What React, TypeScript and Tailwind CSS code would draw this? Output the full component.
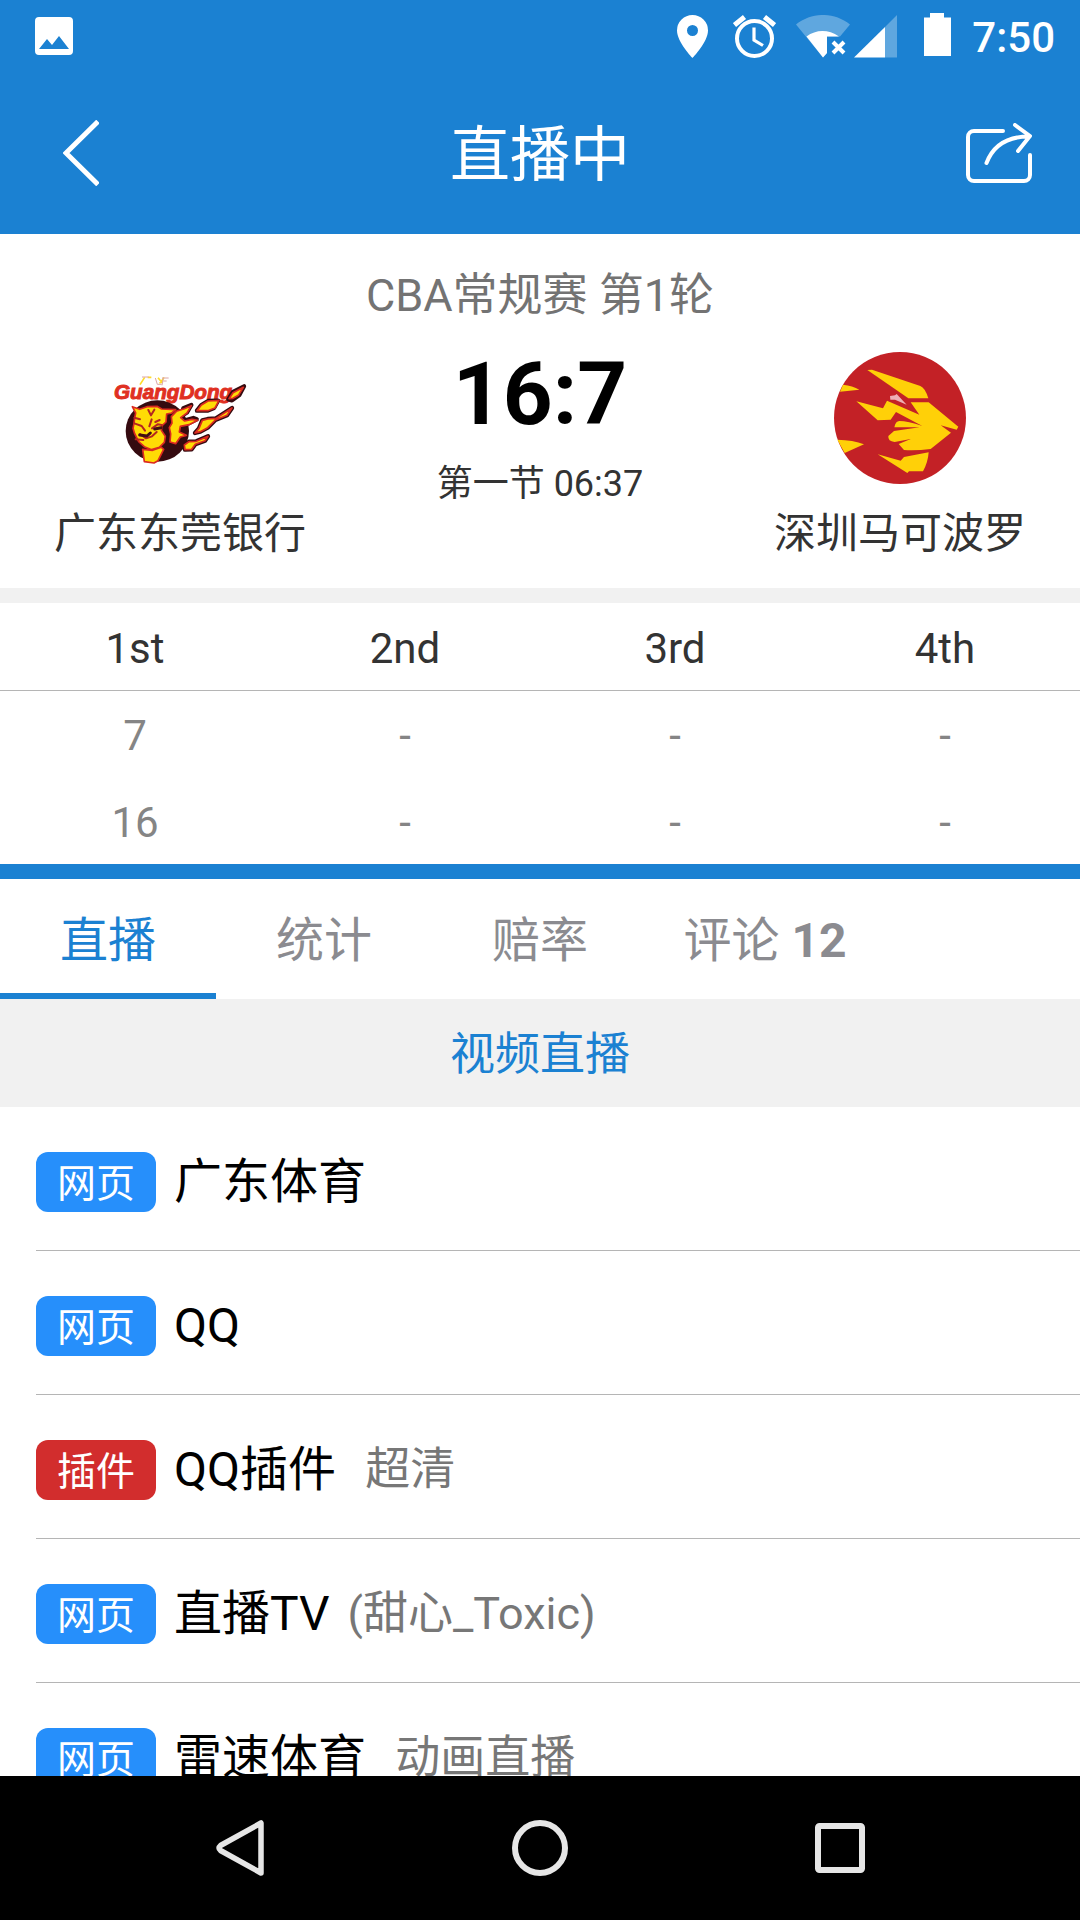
import { useState } from "react";

const quarters = ["1st", "2nd", "3rd", "4th"];
const scores = [
  ["7", "-", "-", "-"],
  ["16", "-", "-", "-"],
];
const tabs = [
  { label: "直播" },
  { label: "统计" },
  { label: "赔率" },
  { label: "评论", count: 12 },
];
const sources = [
  { kind: "网页", name: "广东体育" },
  { kind: "网页", name: "QQ" },
  { kind: "插件", name: "QQ插件", note: "\u00a0超清" },
  { kind: "网页", name: "直播TV", note: "(甜心_Toxic)" },
  { kind: "网页", name: "雷速体育", note: "\u00a0动画直播" },
];

function StatusBar() {
  return (
    <div className="flex h-18 items-center justify-between pr-[25px] pl-[35px] text-white">
      <svg className="h-[38px] w-[38px]" viewBox="0 0 38 38" aria-label="图片">
        <path fill="currentColor" fillRule="evenodd" d="M4 0h30a4 4 0 0 1 4 4v30a4 4 0 0 1-4 4H4a4 4 0 0 1-4-4V4a4 4 0 0 1 4-4ZM4 32h30L24 19l-7 9-5-6Z" />
      </svg>
      <div className="flex items-center">
        <svg className="h-[43px] w-[31px]" viewBox="0 0 31 43" aria-label="定位">
          <path fill="currentColor" fillRule="evenodd" d="M15.500 0A15.500 15.500 0 0 0 0 15.500C0 27 15.500 43 15.500 43S31 27 31 15.500A15.500 15.500 0 0 0 15.500 0Zm0 10a5.500 5.500 0 1 1 0 11 5.500 5.500 0 0 1 0-11Z" />
        </svg>
        <svg className="ml-[25px] h-[43px] w-[43px]" viewBox="0 0 43 43" fill="none" stroke="currentColor" aria-label="闹钟">
          <circle cx="21.500" cy="23.500" r="17.500" strokeWidth="4" />
          <path strokeWidth="5" d="M1.500 10 11.500 2M41.500 10 31.500 2" />
          <path strokeWidth="3.200" d="M21 12.500V25l9 5.500" />
        </svg>
        <svg className="ml-[20px] h-[43px] w-[54px]" viewBox="0 0 54 43" fill="currentColor" aria-label="无线网络未连接">
          <path opacity=".3" d="M0 9.500C16-3.200 38-3.200 54 9.500L44 21.500H31V38L27 42.500Z" />
          <path d="M10.500 21.500C20 14.500 32 14 43 21.500H31V38l-4 4.500Z" />
          <path fill="none" stroke="currentColor" strokeWidth="4" d="m37 27 11 11m0-11L37 38" />
        </svg>
        <svg className="ml-[4px] h-[43px] w-[43px]" viewBox="0 0 43 43" fill="currentColor" aria-label="信号">
          <path opacity=".3" d="M43 0v42.500H31V12Z" />
          <path d="M31 12v30.500H0Z" />
        </svg>
        <svg className="mb-[3px] ml-[27px] h-[43px] w-[27px]" viewBox="0 0 27 43" fill="currentColor" aria-label="电池">
          <path d="M6 0h14v4.500h7V43H0V4.500h6Z" />
        </svg>
        <time className="ml-[21px] pt-[4px] text-[42px] leading-[48px] font-medium">7:50</time>
      </div>
    </div>
  );
}

function TigerLogo() {
  return (
    <svg className="h-[132px] w-[160px]" viewBox="0 -24 480 396" role="img" aria-label="广东东莞银行队徽">
      <text x="42" y="117" fill="#e03022" stroke="#e03022" strokeWidth="3" className="font-['Liberation_Sans'] text-[62px] font-bold italic">GuangDong</text>
      <ellipse cx="172" cy="213" rx="95" ry="92" fill="#350b10" />
      <g strokeLinejoin="round" fill="#350b10" stroke="#350b10" strokeWidth="13">
        <path d="m385 118 14-22 33-17-14 26-22 16Z" />
        <path d="m291 152 13-17 20-12 30-1-12 22-20 8Z" />
        <path d="m285 219 12-14 10-24 16-4 25-2 48-31-15 22-35 14-23 23-22 12Z" />
        <path d="m253 255 14-10 22-1 35-15-9 13-29 11-11 15-20 1Z" />
        <path d="m250 145 24-10-13 22-19 12ZM258 180l22-6 10 4-24 12Z" />
      </g>
      <g fill="#ffdb05" stroke="#db2a20" strokeWidth="5" strokeLinejoin="round">
        <path d="m97 140 22 8 22-8 30-1 14 8 42 2-12 10-15 3-2 24-12 11-2 14 12 18-3 18-15 15-23 7-22-9-17-15-12-24-5-16 3-15 2-16 3-15Z" />
        <path d="m128 268 30 3 26-9 7 6-17 34-12 7-29-4Z" />
        <path d="m214 170 15-16 24-8 21-9-13 22-19 14 12 10 22-5 17 3-26 13-26 5-3 17 21 10-18 5-14 20-17-5 2-24-4-19 8-14Z" />
        <path d="m291 152 13-17 20-12 33-2-12 23-22 8Z" />
        <path d="m387 116 12-18 31-16-15 24-16 9Z" />
        <path d="m285 219 12-14 10-24 16-4 25-2 48-31-15 22-35 14-23 23-22 12Z" />
        <path d="m253 255 14-10 22-1 35-15-9 13-29 11-11 15-20 1Z" />
      </g>
      <g fill="none" stroke="#b42620" strokeWidth="6" strokeLinecap="round" strokeLinejoin="round">
        <path d="m145 150 8 16 10-17M103 190l22 8 10 14M103 173l17 5M156 205l17-12 12 2M120 222l18 13 18-6 14-13M107 238l23 2M155 178l-7 21M179 180l-13 6" />
        <path strokeWidth="9" stroke="#420f12" d="m119 225 22 3 10-9M164 207l19-4" />
      </g>
      <g fill="none">
        <path stroke="#ffdb27" strokeWidth="5" d="m134 52-14 22M143 52h11M174 53l10 12 8-13M178 69l11-3" />
        <path stroke="#dca5a6" strokeWidth="3" d="M126 51h20M166 54l6 19h13M186 54h20M190 63h10M190 54l-4 22" />
      </g>
    </svg>
  );
}

function HorseLogo() {
  return (
    <svg className="h-[132px] w-[132px]" viewBox="41 36 396 396" role="img" aria-label="深圳马可波罗队徽">
      <circle cx="239" cy="234" r="198" fill="#c32126" />
      <g fill="#ffd008">
        <path d="m141 90 14-1 145 49q14 5 24 37h-60Z" />
        <path d="M68 134q29 3 49 15l-58 6ZM51 299q48 1 80 14l-58 26ZM172 343l69 19 10-11 74-14q-2 30-17 57h-42l-5 5Z" />
        <path d="m108 184 80 21 12-23 97 42-26-37h54l89 73-5 9-48-13 31 22-61 49q-41 5-80 3l-16-18 36-15-48 9q-21-2-19-18l17-15 77-11h-76q4-19 15-19 25 0 69 15l-79-42-16 23-39 2Z" />
      </g>
      <path fill="#eeb0b5" d="m209 168 15-2 5-4 30 32-35-15-14 0Z" />
    </svg>
  );
}

export default function App() {
  const [active, setActive] = useState(0);
  return (
    <div className="flex h-screen flex-col overflow-hidden bg-white font-[Roboto,'Noto_Sans_CJK_SC',sans-serif] text-black">
      <header className="shrink-0 bg-[#1b81d2] text-white">
        <StatusBar />
        <div className="grid h-[162px] grid-cols-3 items-center">
          <button type="button" aria-label="返回" className="ml-[63px] justify-self-start">
            <svg className="h-[66px] w-[36px]" viewBox="0 0 36 66" fill="none" stroke="currentColor" strokeWidth="5">
              <path d="M35 1.500 3 33l32 31.500" />
            </svg>
          </button>
          <h1 className="pt-[6px] text-center text-[60px] leading-[72px]">直播中</h1>
          <button type="button" aria-label="分享" className="mr-12 justify-self-end">
            <svg className="h-[60px] w-[66px]" viewBox="0 0 66 60" fill="none" stroke="currentColor" strokeWidth="4" strokeLinecap="round" strokeLinejoin="round">
              <path d="M37 8H8a6 6 0 0 0-6 6v38a6 6 0 0 0 6 6h50a6 6 0 0 0 6-6V32" />
              <path d="M20.500 40C27 23 41 13.500 63 13.500M49 2l15 11-12 15" />
            </svg>
          </button>
        </div>
      </header>

      <section className="shrink-0 border-b-[15px] border-[#f1f1f1] pt-8 pb-6">
        <p className="text-center text-[45px] leading-[60px] text-[#737373]">CBA常规赛 第1轮</p>
        <div className="grid grid-cols-3 text-center text-[#333]">
          <div className="flex flex-col items-center gap-5 pt-[26px]">
            <TigerLogo />
            <h2 className="text-[42px] leading-[60px]">广东东莞银行</h2>
          </div>
          <div className="pt-5">
            <p className="text-[87px] leading-[96px] font-bold text-black">16:7</p>
            <p className="mt-[18px] text-[36px] leading-[48px]">第一节 06:37</p>
          </div>
          <div className="flex flex-col items-center gap-5 pt-[26px]">
            <HorseLogo />
            <h2 className="text-[42px] leading-[60px]">深圳马可波罗</h2>
          </div>
        </div>
      </section>

      <table className="w-full shrink-0 table-fixed border-collapse text-center text-[42px] leading-[48px]">
        <thead>
          <tr className="h-[87px] border-b border-[#b5b5b5] text-[#333]">
            {quarters.map((q) => (
              <th key={q} scope="col" className="p-0 pt-[6px] font-normal">{q}</th>
            ))}
          </tr>
        </thead>
        <tbody className="text-[#858585]">
          {scores.map((row, i) => (
            <tr key={i} className="h-[87px]">
              {row.map((s, j) => (
                <td key={j} className="p-0 pt-[4px]">{s}</td>
              ))}
            </tr>
          ))}
        </tbody>
      </table>

      <div role="tablist" className="grid h-[135px] shrink-0 grid-cols-5 border-t-[15px] border-[#1b81d2]">
        {tabs.map((tab, i) => (
          <button
            key={tab.label}
            type="button"
            role="tab"
            aria-selected={i === active}
            onClick={() => setActive(i)}
            className={
              "flex items-center justify-center gap-3 border-b-[6px] pt-[10px] text-[48px] leading-[60px] whitespace-nowrap " +
              (i === active ? "border-[#1b81d2] text-[#1b81d2]" : "border-transparent text-[#8b8b90]") +
              (tab.count ? " pl-[18px]" : "")
            }
          >
            <span>{tab.label}</span>
            {tab.count && <span className="font-bold">{tab.count}</span>}
          </button>
        ))}
      </div>

      <main className="min-h-0 flex-1 overflow-hidden">
        <h2 className="flex h-[108px] items-center justify-center bg-[#f1f1f1] pt-1 text-[45px] leading-[60px] text-[#1b81d2]">视频直播</h2>
        <ul className="pl-9">
          {sources.map((s) => (
            <li key={s.name} className="border-b border-[#b5b5b5]">
              <a href="#" className="flex h-[143px] items-center pt-[6px]">
                <span
                  className={
                    "flex h-[60px] w-[120px] items-center justify-center rounded-xl pt-[4px] text-[39px] leading-[60px] text-white " +
                    (s.kind === "插件" ? "bg-[#d22d2d]" : "bg-[#268ffb]")
                  }
                >
                  {s.kind}
                </span>
                <span className="ml-[18px] text-[48px] leading-[60px]">{s.name}</span>
                {s.note && <span className="ml-[18px] text-[45px] leading-[60px] text-[#777]">{s.note}</span>}
              </a>
            </li>
          ))}
        </ul>
      </main>

      <nav className="flex h-36 shrink-0 items-center justify-center bg-black text-[#e6e6e6]">
        <button type="button" aria-label="返回" className="flex w-[300px] justify-center">
          <svg className="h-14 w-12" viewBox="0 0 48 56" fill="none" stroke="currentColor" strokeWidth="5.500" strokeLinejoin="round">
            <path d="M45 3v50L4.500 30.500Q1.500 28 4.500 25.500Z" />
          </svg>
        </button>
        <button type="button" aria-label="主屏幕" className="flex w-[300px] justify-center">
          <svg className="h-14 w-14" viewBox="0 0 56 56" fill="none" stroke="currentColor" strokeWidth="6">
            <circle cx="28" cy="28" r="25" />
          </svg>
        </button>
        <button type="button" aria-label="最近任务" className="flex w-[300px] justify-center">
          <svg className="h-[50px] w-[50px]" viewBox="0 0 50 50" fill="none" stroke="currentColor" strokeWidth="6">
            <rect x="3" y="3" width="44" height="44" rx="1.500" />
          </svg>
        </button>
      </nav>
    </div>
  );
}
